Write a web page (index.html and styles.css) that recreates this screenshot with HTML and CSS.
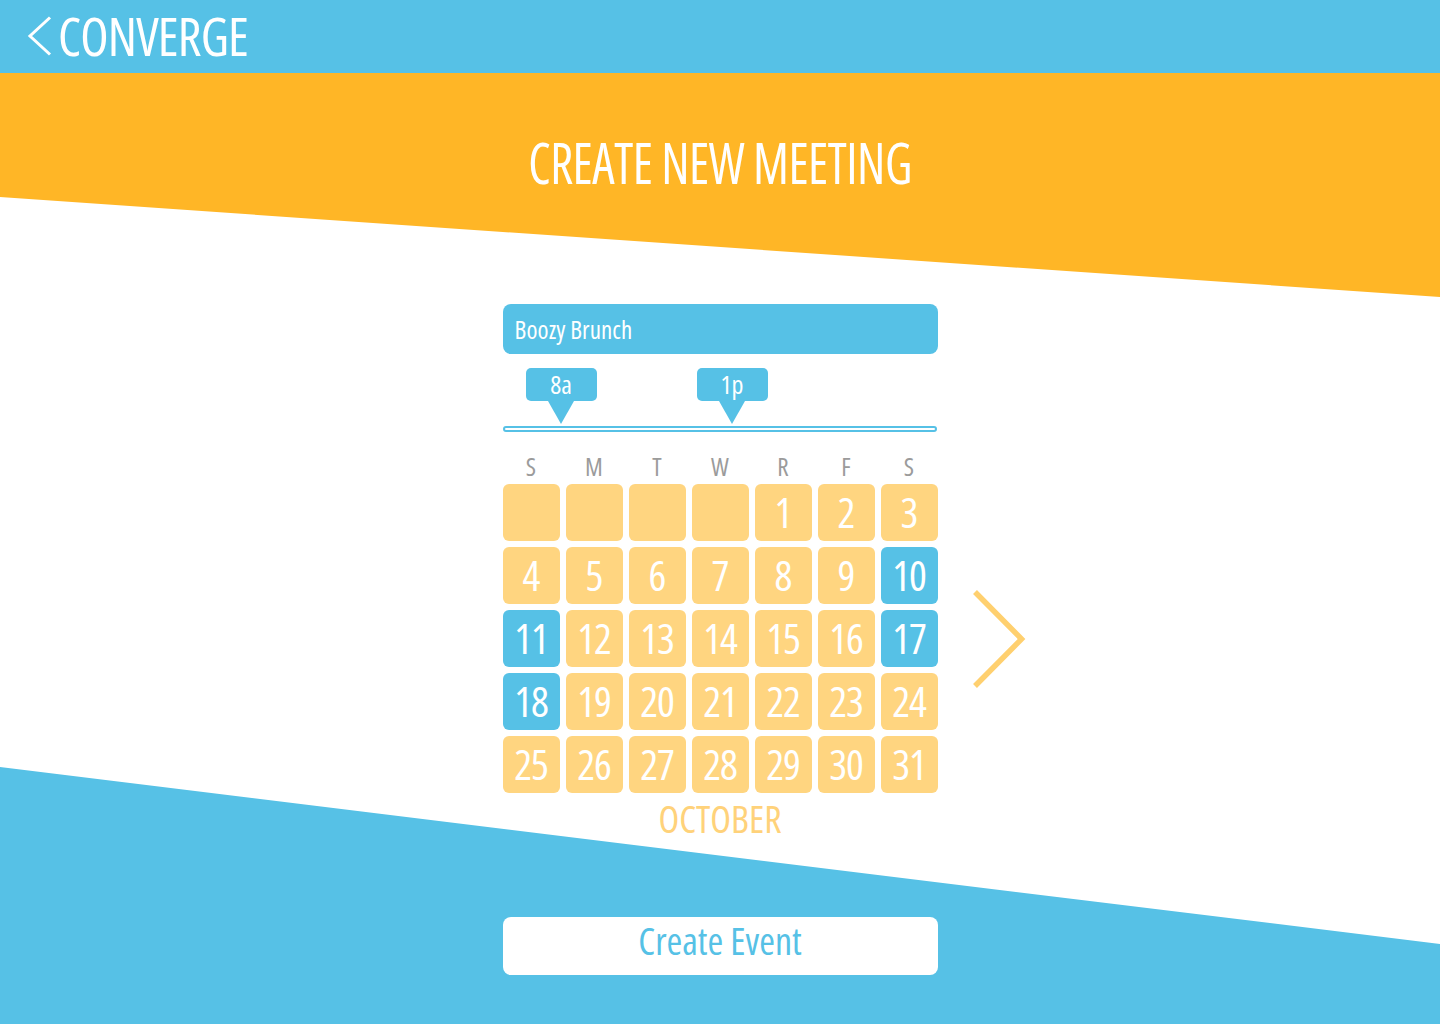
FILE: index.html
```html
<!DOCTYPE html>
<html lang="en">
<head>
<meta charset="utf-8">
<title>Converge - Create New Meeting</title>
<link rel="stylesheet" href="styles.css">
</head>
<body>
<div class="backdrop">
  <div class="band-orange"></div>
  <div class="band-blue"></div>
</div>

<header class="topbar">
  <svg class="back-icon" width="26" height="40" viewBox="0 0 26 40" aria-hidden="true">
    <polyline points="23,1.5 3,20 23,38.5" fill="none" stroke="#ffffff" stroke-width="3"/>
  </svg>
  <span class="brand">CONVERGE</span>
</header>

<main class="page">
  <h1 class="title"><span class="title-text">CREATE NEW MEETING</span></h1>

  <div class="name-field">Boozy Brunch</div>

  <div class="tips">
    <div class="tip tip-start">8a</div>
    <div class="tip tip-end">1p</div>
  </div>
  <div class="track"></div>

  <div class="dow">
    <span>S</span><span>M</span><span>T</span><span>W</span><span>R</span><span>F</span><span>S</span>
  </div>

  <div class="days">
    <div class="day"></div><div class="day"></div><div class="day"></div><div class="day"></div>
    <div class="day">1</div><div class="day">2</div><div class="day">3</div>
    <div class="day">4</div><div class="day">5</div><div class="day">6</div><div class="day">7</div>
    <div class="day">8</div><div class="day">9</div><div class="day sel">10</div>
    <div class="day sel">11</div><div class="day">12</div><div class="day">13</div><div class="day">14</div>
    <div class="day">15</div><div class="day">16</div><div class="day sel">17</div>
    <div class="day sel">18</div><div class="day">19</div><div class="day">20</div><div class="day">21</div>
    <div class="day">22</div><div class="day">23</div><div class="day">24</div>
    <div class="day">25</div><div class="day">26</div><div class="day">27</div><div class="day">28</div>
    <div class="day">29</div><div class="day">30</div><div class="day">31</div>
  </div>

  <div class="next">
    <svg width="54" height="100" viewBox="0 0 54 100" aria-hidden="true">
      <polyline points="3,3 49.5,50 3,97" fill="none" stroke="#FFD06F" stroke-width="5.5"/>
    </svg>
  </div>

  <div class="month">OCTOBER</div>

  <button class="create" type="button">Create Event</button>
</main>
</body>
</html>
```
FILE: styles.css
```css
* { box-sizing: border-box; }

html, body {
  margin: 0;
  padding: 0;
}

body {
  width: 1440px;
  height: 1024px;
  overflow: hidden;
  position: relative;
  background: #ffffff;
  font-family: "Open Sans", "Roboto", sans-serif;
  font-stretch: 75%;
  font-weight: 420;
}

/* decorative diagonal bands behind content */
.backdrop {
  position: absolute;
  inset: 0;
  z-index: 0;
}
.band-orange {
  position: absolute;
  left: 0;
  top: 73px;
  width: 1440px;
  height: 224px;
  background: #FFB626;
  clip-path: polygon(0 0, 100% 0, 100% 100%, 0 124px);
}
.band-blue {
  position: absolute;
  left: 0;
  top: 767px;
  width: 1440px;
  height: 257px;
  background: #56C1E6;
  clip-path: polygon(0 0, 100% 177px, 100% 100%, 0 100%);
}

/* top bar */
.topbar {
  position: relative;
  z-index: 1;
  height: 73px;
  background: #56C1E6;
  display: flex;
  align-items: center;
  padding: 0 0 2px 27px;
  gap: 5px;
  color: #ffffff;
}
.back-icon { display: block; }
.brand {
  font-size: 52px;
  line-height: 52px;
  letter-spacing: -0.8px;
}

/* main layout */
.page {
  position: relative;
  z-index: 1;
  display: grid;
  grid-template-columns: 1fr 435px 1fr;
}
.page > * { grid-column: 2; }

.title {
  grid-column: 1 / -1;
  grid-row: 1;
  margin: 61px 0 0;
  text-align: center;
  color: #ffffff;
  font-weight: 420;
  font-size: 56px;
  line-height: 56px;
  letter-spacing: -0.5px;
}
.title-text {
  display: inline-block;
  transform: scaleX(0.9);
}

.name-field {
  grid-row: 2;
  margin-top: 114px;
  height: 50px;
  border-radius: 8px;
  background: #56C1E6;
  color: #ffffff;
  font-size: 25px;
  line-height: 50px;
  padding-left: 12px;
  letter-spacing: 0.1px;
}

.tips {
  grid-row: 3;
  margin-top: 14px;
  height: 56px;
  display: flex;
  align-items: flex-start;
}
.tip {
  position: relative;
  width: 71px;
  height: 33px;
  border-radius: 5px;
  background: #56C1E6;
  color: #ffffff;
  font-size: 26px;
  line-height: 33px;
  text-align: center;
}
.tip::after {
  content: "";
  position: absolute;
  top: 100%;
  left: 50%;
  transform: translateX(-50%);
  border-left: 13px solid transparent;
  border-right: 13px solid transparent;
  border-top: 23px solid #56C1E6;
}
.tip-start { margin-left: 23px; }
.tip-end { margin-left: 100px; }

.track {
  grid-row: 4;
  margin-top: 2px;
  width: 434px;
  height: 6px;
  border: 2px solid #56C1E6;
  border-radius: 3px;
  background: #ffffff;
}

.dow {
  grid-row: 5;
  margin-top: 22px;
  display: grid;
  grid-template-columns: repeat(7, 57px);
  column-gap: 6px;
  height: 25px;
  font-size: 25px;
  line-height: 25px;
  color: #9B9B9B;
  text-align: center;
}

.days {
  grid-row: 6;
  margin-top: 5px;
  display: grid;
  grid-template-columns: repeat(7, 57px);
  grid-auto-rows: 57px;
  gap: 6px;
}
.day {
  border-radius: 6px;
  background: #FFD580;
  color: #ffffff;
  font-size: 42px;
  font-weight: 450;
  line-height: 55px;
  text-align: center;
  letter-spacing: -1px;
}
.day.sel { background: #56C1E6; }

.next {
  grid-column: 3;
  grid-row: 6;
  align-self: center;
  justify-self: start;
  margin-left: 34px;
  margin-top: 5px;
}
.next svg { display: block; }

.month {
  grid-row: 7;
  margin-top: 6px;
  text-align: center;
  color: #FFD27A;
  font-size: 38px;
  line-height: 38px;
  letter-spacing: 0;
}

.create {
  grid-row: 8;
  margin-top: 80px;
  width: 435px;
  height: 58px;
  border: 0;
  border-radius: 8px;
  background: #ffffff;
  color: #56C1E6;
  font-family: inherit;
  font-stretch: 75%;
  font-weight: 420;
  font-size: 38px;
  line-height: 47px;
  padding: 0 0 11px;
  letter-spacing: 0;
  cursor: pointer;
}
```
